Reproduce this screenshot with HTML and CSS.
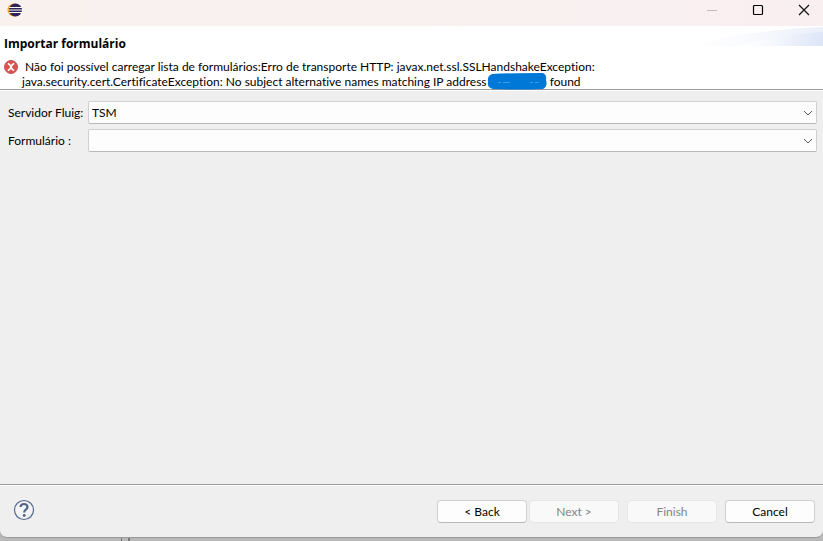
FILE: index.html
```html
<!DOCTYPE html>
<html lang="pt-BR">
<head>
    <meta charset="UTF-8" />
    <title>Importar formulário</title>
    <link rel="stylesheet" href="styles.css">
</head>
<body>

<div class="dialog">
    <div class="titlebar">
        <svg class="app-icon" width="16" height="16" viewBox="0 0 16 16">
            <circle cx="7" cy="8" r="6.500" fill="#f7941e"/>
            <circle cx="8.500" cy="8" r="6.500" fill="#2c2255"/>
            <path d="M2 5.500h13M1.500 8h14M2 10.500h13" stroke="#fff" stroke-width="1.200"/>
        </svg>
        <div class="window-buttons">
            <button type="button" aria-label="Minimize" disabled>
                <svg width="12" height="12" viewBox="0 0 12 12"><path d="M1 6.500h10" stroke="#c4bcbc"/></svg>
            </button>
            <button type="button" aria-label="Maximize">
                <svg width="12" height="12" viewBox="0 0 12 12"><rect x="1.500" y="1.500" width="9" height="9" rx="1" fill="none" stroke="#000" stroke-width="1.200"/></svg>
            </button>
            <button type="button" aria-label="Close">
                <svg width="12" height="12" viewBox="0 0 12 12"><path d="M1 1l10 10M11 1L1 11" stroke="#111" stroke-width="1.200"/></svg>
            </button>
        </div>
    </div>

    <div class="header">
        <svg class="banner" width="135" height="20" viewBox="0 0 135 20">
            <defs>
                <linearGradient id="wave">
                    <stop offset="0" stop-color="#fff"/>
                    <stop offset="0.400" stop-color="#f6f8fd"/>
                    <stop offset="1" stop-color="#dde5f7"/>
                </linearGradient>
            </defs>
            <path d="M0 20Q60 4 135 1V20Z" fill="url(#wave)" opacity="0.600"/>
            <path d="M50 20Q90 9 135 6V20Z" fill="url(#wave)"/>
        </svg>
        <h1>Importar formulário</h1>
        <div class="message">
            <svg class="error-icon" width="16" height="16" viewBox="0 0 16 16">
                <circle cx="8" cy="8" r="6.500" fill="#d9534f" stroke="#c8545a"/>
                <path d="M4.800 4.500Q7 5 8 8T11.200 11.500M11.200 4.500Q9 5 8 8T4.800 11.500" fill="none" stroke="#fff" stroke-width="1.700"/>
            </svg>
            <p>&nbsp;Não foi possível carregar lista de formulários:Erro de transporte HTTP: javax.net.ssl.SSLHandshakeException:<br>java.security.cert.CertificateException: No subject alternative names matching IP address<svg class="redacted" width="60" height="17" viewBox="0 0 60 17"><path d="M5 1Q25 0 56 0Q60 2 59 7Q61 13 56 16Q30 17 6 16Q0 15 1 9Q0 3 5 1Z" fill="#0078d7"/><path d="M11 9.500h3m2 0h7M43 9.500h3m2 0h4" stroke="#3c9ae6"/></svg> found</p>
        </div>
    </div>

    <form class="content">
        <label for="server">Servidor Fluig:</label>
        <select id="server">
            <option>TSM</option>
        </select>
        <label for="form">Formulário :</label>
        <select id="form">
            <option></option>
        </select>
    </form>

    <div class="footer">
        <button type="button" class="help" aria-label="Help">
            <svg width="22" height="22" viewBox="0 0 22 22">
                <circle cx="11" cy="11" r="9.500" fill="#f3f4f6" stroke="#56698c" stroke-width="1.200"/>
                <path d="M7.500 8Q7.800 5 11 5T14.500 8Q14.500 9.500 12.800 10.700Q11.200 11.800 11.200 13.500" fill="none" stroke="#506488" stroke-width="2.200"/>
                <circle cx="11.200" cy="16.500" r="1.400" fill="#506488"/>
            </svg>
        </button>
        <div class="actions">
            <div class="nav">
                <button type="button" class="btn">&lt; Back</button>
                <button type="button" class="btn" disabled>Next &gt;</button>
            </div>
            <button type="button" class="btn" disabled>Finish</button>
            <button type="button" class="btn">Cancel</button>
        </div>
    </div>
</div>

<div class="behind"><span class="splitter"></span></div>

</body>
</html>
```

FILE: styles.css
```css
* {
    box-sizing: border-box;
}
body {
    margin: 0;
    min-height: 100vh;
    display: flex;
    flex-direction: column;
    background-color: #b9b9b9;
    color: #000;
    font-family: Lato, "Noto Sans", sans-serif;
    font-size: 12px;
    line-height: 15px;
    font-variant-ligatures: none;
}
button,
select {
    font: inherit;
    color: inherit;
}
.dialog {
    flex: 1;
    display: flex;
    flex-direction: column;
    background-color: #efefef;
    border-bottom: 1px solid #9a9a9a;
    border-radius: 0 0 7px 7px;
}

/* Title bar */
.titlebar {
    display: flex;
    justify-content: space-between;
    height: 26px;
    padding-left: 7px;
    background: linear-gradient(to right, #f8f1ee, #f9eff1);
}
.app-icon {
    margin-top: 2px;
}
.window-buttons {
    display: flex;
    gap: 34px;
    height: 20px;
    padding-right: 13px;
}
.window-buttons button {
    display: flex;
    align-items: center;
    padding: 0;
    border: none;
    background: none;
}

/* Message area */
.header {
    position: relative;
    padding: 10px 4px 0;
    background-color: #fff;
    border-bottom: 1px solid #9c9c9c;
}
.banner {
    position: absolute;
    top: 0;
    right: 0;
}
h1 {
    margin: 0;
    font-family: "Open Sans", "Noto Sans", sans-serif;
    font-size: 12px;
    line-height: 15px;
}
.message {
    display: flex;
    margin-top: 8px;
}
.error-icon {
    flex: none;
    margin-left: -1px;
}
.message p {
    margin: 0 0 0 3px;
    white-space: nowrap;
}
.redacted {
    margin: -1px 0;
    vertical-align: top;
}

/* Fields */
.content {
    flex: 1;
    display: grid;
    grid-template-columns: 76px 1fr;
    column-gap: 4px;
    row-gap: 5px;
    align-content: start;
    align-items: center;
    padding: 10px 6px 0 8px;
    border-top: 1px solid #fff;
}
.content label {
    padding-bottom: 1px;
    white-space: nowrap;
}
select {
    width: 100%;
    height: 23px;
    padding: 0 24px 0 3px;
    border: 1px solid #d0d0d0;
    border-bottom-color: #b9b9b9;
    border-radius: 2px;
    appearance: none;
    background: #fdfdfd url('data:image/svg+xml,%3Csvg xmlns="http://www.w3.org/2000/svg" width="10" height="6"%3E%3Cpath d="M1 1l4 4 4-4" fill="none" stroke="%23555"/%3E%3C/svg%3E') no-repeat right 3px center;
}

/* Button bar */
.footer {
    display: flex;
    justify-content: space-between;
    align-items: center;
    height: 53px;
    padding: 0 8px 0 13px;
    border-top: 1px solid #9c9c9c;
    box-shadow: inset 0 1px #fff;
}
.help {
    display: flex;
    padding: 0 0 2px;
    border: none;
    background: none;
}
.actions {
    display: flex;
    gap: 8px;
}
.nav {
    display: flex;
    gap: 2px;
}
.btn {
    width: 90px;
    height: 23px;
    padding: 0;
    border: 1px solid #d0d0d0;
    border-bottom-color: #b9b9b9;
    border-radius: 4px;
    background-color: #fdfdfd;
}
.btn:disabled {
    color: #838383;
    background-color: #f9f9f9;
    border-color: #e6e6e6;
}

/* Window underneath */
.behind {
    height: 3px;
    padding-left: 121px;
}
.splitter {
    display: block;
    width: 9px;
    height: 3px;
    border: solid #777;
    border-width: 0 2px 0 1px;
}
```
